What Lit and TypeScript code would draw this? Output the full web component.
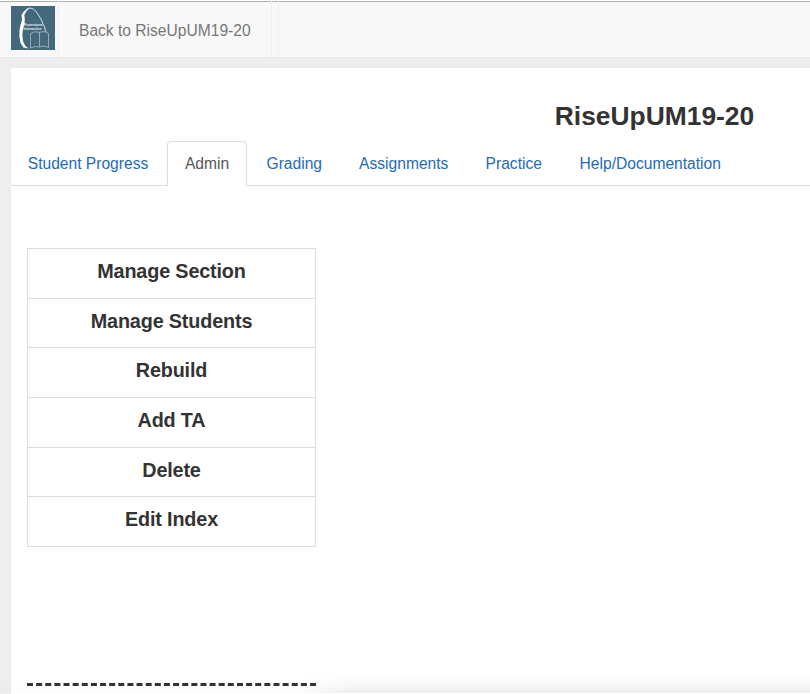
import { LitElement, html, css } from "lit";
import { customElement } from "lit/decorators.js";

const TABS = ["Student Progress", "Admin", "Grading", "Assignments", "Practice", "Help/Documentation"];
const ACTIONS = ["Manage Section", "Manage Students", "Rebuild", "Add TA", "Delete", "Edit Index"];

@customElement("app-logo")
export class AppLogo extends LitElement {
  static styles = css`
    :host { display: block; width: 44px; height: 44px; }
    svg { display: block; }
    text { font-family: "Liberation Sans", Arial, sans-serif; font-weight: 700; fill: #e4ebee; }
  `;
  render() {
    return html`<svg width="44" height="44" viewBox="0 0 44 44" aria-label="Runestone Interactive">
      <rect width="44" height="44" fill="#44697d" />
      <path d="M19 1.800L15.500 3L12 6.500L10.500 9L11 14L9.500 19L8.500 24V31L9.500 37L12.500 41.500L17.500 42.500L14 39.500L12 35L11.300 29L11.800 24L13.500 18L13.800 13L13.300 9L15.500 5Z" fill="#fff" />
      <path d="M16 2.800L19 2L22.500 3L25 5.500L28 10L30.500 14L32 18L33.500 21L35 26" fill="none" stroke="#d5dfe3" stroke-width="1" />
      <path d="M19.500 27.500L24 25.800L28.500 26.300L33 25.500L37.500 27.500V41.500L33 40L28.500 41L24 40.500L19.500 42ZM28.500 26V41" fill="none" stroke="#a9bcc5" stroke-width="0.800" />
      <text x="12.500" y="20" font-size="4.300" textLength="19" lengthAdjust="spacingAndGlyphs">Runestone</text>
      <text x="12.500" y="24" font-size="4.300" textLength="18" lengthAdjust="spacingAndGlyphs">Interactive</text>
    </svg>`;
  }
}

@customElement("app-root")
export class AppRoot extends LitElement {
  static styles = css`
    :host {
      display: block; position: relative; height: 694px; overflow: hidden;
      background: #eee; color: #333;
      font-family: "Liberation Sans", Arial, sans-serif; font-size: 15.6px;
    }
    * { box-sizing: border-box; }
    header {
      display: flex; height: 58px; background: #f8f8f8;
      border-top: 1px solid #fff; border-bottom: 1px solid #e7e7e7;
      box-shadow: inset 0 1px #acaeac;
    }
    .brand { width: 59px; padding: 5px 0 0 11px; border-right: 1px solid #f1f1f1; }
    .back {
      width: 213px; padding: 2px 0 0 20px; line-height: 56px; color: #777;
      white-space: nowrap; border-right: 1px solid #f0f0f0;
    }
    .gap { width: 7px; border-right: 1px solid #f0f0f0; }
    main { margin: 10px 0 0 11px; height: 626px; width: 1287px; background: #fff; padding-top: 29px; }
    h1 { margin: 0; height: 44px; line-height: 38px; font-size: 26.4px; font-weight: 700; text-align: center; }
    nav {
      display: grid; grid-template-columns: 154px 80px 90.5px 124.5px 91.5px 177.5px;
      column-gap: 2px; height: 45px; border-bottom: 1px solid #ddd;
    }
    .tab {
      height: 45px; line-height: 43px; color: #1e6bb8; text-align: center;
      white-space: nowrap; border: 1px solid transparent; border-bottom: 0;
    }
    .tab.active { color: #555; background: #fff; border-color: #ddd; border-radius: 4px 4px 0 0; }
    .list {
      display: grid; grid-template-rows: 50px 49px 50px 50px 49px 50px;
      width: 289px; margin: 62px 0 0 16px; border: 1px solid #ddd; border-top: 0;
    }
    .item {
      border-top: 1px solid #ddd; text-align: center; line-height: 44px;
      font-size: 19.8px; font-weight: 700; letter-spacing: -0.15px;
    }
    .rule { width: 289px; margin: 136px 0 0 16px; border-top: 3px dashed #333; }
    .shade {
      position: absolute; left: 0; right: 0; bottom: 1px; height: 22px;
      background: linear-gradient(transparent, rgba(0, 0, 0, 0.02) 55%, rgba(0, 0, 0, 0.065));
      mask-image: linear-gradient(90deg, rgba(0, 0, 0, 0.15) 300px, #000 350px);
    }
  `;
  render() {
    return html`
      <header>
        <div class="brand"><app-logo></app-logo></div>
        <div class="back">Back to RiseUpUM19-20</div>
        <div class="gap"></div>
      </header>
      <main>
        <h1>RiseUpUM19-20</h1>
        <nav>${TABS.map((t) => html`<div class="tab ${t === "Admin" ? "active" : ""}">${t}</div>`)}</nav>
        <div class="list">${ACTIONS.map((t) => html`<div class="item">${t}</div>`)}</div>
        <div class="rule"></div>
      </main>
      <div class="shade"></div>
    `;
  }
}
